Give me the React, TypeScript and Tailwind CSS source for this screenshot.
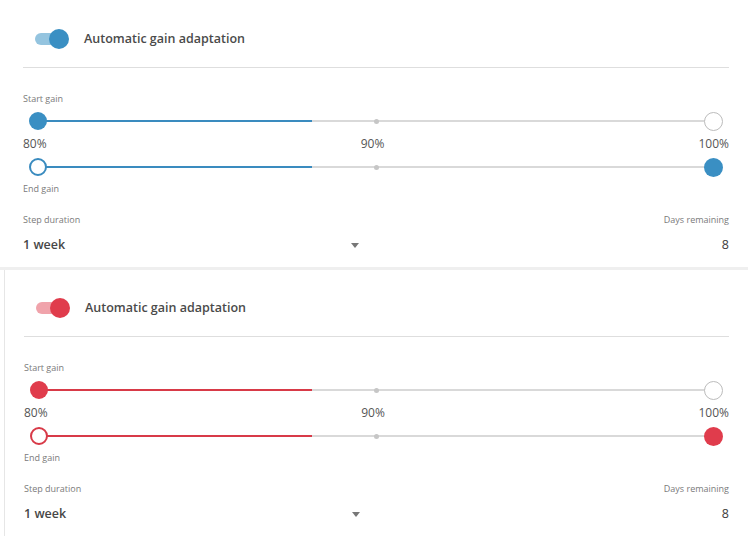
import React from 'react';

interface Theme {
  thumb: string;
  track: string;
  fill: string;
  hollow: string;
}

const blue: Theme = {
  thumb: 'bg-[#3a8fc3]',
  track: 'bg-[#94c4df]',
  fill: 'bg-[#3a8bbf]',
  hollow: 'border-[#3a8bbf]',
};

const red: Theme = {
  thumb: 'bg-[#e03c4c]',
  track: 'bg-[#f0a3ab]',
  fill: 'bg-[#d83a48]',
  hollow: 'border-[#d83a48]',
};

function Toggle({ theme }: { theme: Theme }) {
  return (
    <div className="relative w-[32px] h-5 flex items-center">
      <div className={`w-[28px] h-[12px] rounded-full ml-[2px] ${theme.track}`} />
      <div className={`absolute right-[-4px] top-0 w-5 h-5 rounded-full ${theme.thumb}`} />
    </div>
  );
}

function Slider({ theme, startFilled }: { theme: Theme; startFilled: boolean }) {
  return (
    <div className="relative h-5 mx-[15px]">
      <div className="absolute left-0 right-0 top-[9px] h-[2px] bg-[#d9d9d9]" />
      <div className={`absolute left-0 top-[9px] h-[2px] w-[40.5%] ${theme.fill}`} />
      <div className="absolute left-1/2 top-[7.5px] w-[5px] h-[5px] -ml-[2.5px] rounded-full bg-[#c6c6c6]" />
      {startFilled ? (
        <div className={`absolute left-[-9px] top-[1px] w-[18px] h-[18px] rounded-full ${theme.thumb}`} />
      ) : (
        <div className={`absolute left-[-9px] top-[1px] w-[18px] h-[18px] rounded-full bg-white border-2 ${theme.hollow}`} />
      )}
      {startFilled ? (
        <div className="absolute right-[-9px] top-[0.5px] w-[19px] h-[19px] rounded-full bg-white border-[1.5px] border-[#bcbcbc]" />
      ) : (
        <div className={`absolute right-[-9px] top-[0.5px] w-[19px] h-[19px] rounded-full ${theme.thumb}`} />
      )}
    </div>
  );
}

function Panel({ theme, first }: { theme: Theme; first: boolean }) {
  return (
    <div
      className={
        first
          ? 'pl-[23px] pr-[19px] pt-[29px] pb-[13px]'
          : 'ml-[4px] border-l border-[#e6e6e6] pl-[19px] pr-[19px] pt-[28px] pb-[13px]'
      }
    >
      {/* Header */}
      <div className="flex items-center gap-[19px] pl-[10px] h-5">
        <Toggle theme={theme} />
        <span className="text-[12.5px] font-semibold text-[#4a4a4a]">Automatic gain adaptation</span>
      </div>
      <div className="mt-[18px] h-px bg-[#dedede]" />

      <div className="mt-[25px] text-[9px] leading-[12px] text-[#7a7a7a]">Start gain</div>
      <div className="mt-[6px]">
        <Slider theme={theme} startFilled={true} />
      </div>
      <div className="mt-[5px] flex justify-between text-[12px] leading-[16px] text-[#555]">
        <span>80%</span>
        <span>90%</span>
        <span>100%</span>
      </div>
      <div className="mt-[5px]">
        <Slider theme={theme} startFilled={false} />
      </div>
      <div className="mt-[6px] text-[9px] leading-[12px] text-[#7a7a7a]">End gain</div>

      {/* Duration row */}
      <div className="mt-[19px] flex justify-between items-end">
        <div className="w-[340px]">
          <div className="text-[9px] leading-[12px] text-[#7a7a7a]">Step duration</div>
          <div className="mt-[10px] flex items-center justify-between">
            <span className="text-[12.5px] leading-[18px] font-semibold text-[#474747]">1 week</span>
            <span className="w-0 h-0 border-l-[4.5px] border-r-[4.5px] border-t-[5px] border-l-transparent border-r-transparent border-t-[#777] mr-[4px]" />
          </div>
        </div>
        <div className="text-right">
          <div className="text-[9px] leading-[12px] text-[#7a7a7a]">Days remaining</div>
          <div className="mt-[10px] text-[12.5px] leading-[18px] text-[#3c3c3c]">8</div>
        </div>
      </div>
    </div>
  );
}

export default function App() {
  return (
    <div className="w-[748px] h-[539px] bg-white overflow-hidden" style={{ fontFamily: '"Open Sans", "Noto Sans", sans-serif' }}>
      <Panel theme={blue} first={true} />
      <div className="h-[3px] bg-[#efefef]" />
      <Panel theme={red} first={false} />
    </div>
  );
}
